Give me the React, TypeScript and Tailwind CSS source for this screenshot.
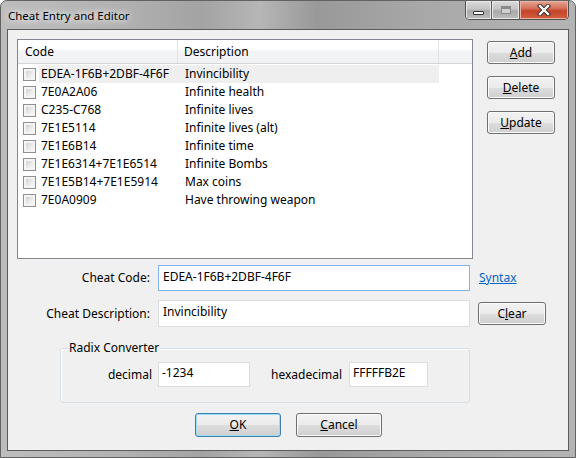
import React from "react";

const FONT = { fontFamily: '"Noto Sans", "Open Sans", Arial, sans-serif' };

function WinButton({
  children,
  className = "",
  isDefault = false,
}: {
  children: React.ReactNode;
  className?: string;
  isDefault?: boolean;
}) {
  return (
    <div
      className={
        "flex items-center justify-center rounded-[3px] border text-[12px] text-black " +
        (isDefault
          ? "border-[#3c7fb1] shadow-[inset_0_0_0_1px_#9fdcf7] bg-[linear-gradient(to_bottom,#f2f2f2_0%,#ebebeb_50%,#dddddd_51%,#cfcfcf_100%)] "
          : "border-[#707070] shadow-[inset_0_0_0_1px_#fbfbfb] bg-[linear-gradient(to_bottom,#f2f2f2_0%,#ebebeb_50%,#dddddd_51%,#cfcfcf_100%)] ") +
        className
      }
    >
      {children}
    </div>
  );
}

function Check() {
  return (
    <span className="flex h-[13px] w-[13px] shrink-0 border border-[#8e8f8f] bg-[#f4f4f4] p-[2px]">
      <span className="block h-full w-full bg-[linear-gradient(135deg,#cfd1d4_0%,#e6e7e8_50%,#f7f7f7_100%)]" />
    </span>
  );
}

const rows = [
  ["EDEA-1F6B+2DBF-4F6F", "Invincibility"],
  ["7E0A2A06", "Infinite health"],
  ["C235-C768", "Infinite lives"],
  ["7E1E5114", "Infinite lives (alt)"],
  ["7E1E6B14", "Infinite time"],
  ["7E1E6314+7E1E6514", "Infinite Bombs"],
  ["7E1E5B14+7E1E5914", "Max coins"],
  ["7E0A0909", "Have throwing weapon"],
];

export default function App() {
  return (
    <div
      style={FONT}
      className="flex h-[458px] w-[576px] flex-col overflow-hidden rounded-t-[7px] border border-[#626262] bg-[linear-gradient(90deg,#bdbdbd_0%,#b2b2b2_20%,#a3a3a3_35%,#b6b6b6_45%,#999999_55%,#a9a9a9_75%,#b4b4b4_100%)] px-[6px] text-[12px] text-black"
    >
      {/* Title bar */}
      <div className="flex h-[28px] shrink-0 items-center justify-between">
        <div className="pl-[1px] pt-[2px] text-[11.5px] text-black [text-shadow:0_0_6px_#ffffff,0_0_10px_#ffffff]">
          Cheat Entry and Editor
        </div>
        <div className="flex h-[19px] self-start overflow-hidden rounded-b-[5px] border border-t-0 border-[#4f4f4f]">
          <div className="flex w-[26px] items-center justify-center border-r border-[#5d5d5d] bg-[linear-gradient(to_bottom,#dcdcdc_0%,#c4c4c4_45%,#a9a9a9_55%,#bdbdbd_100%)] shadow-[inset_0_0_0_1px_#e8e8e8]">
            <span className="mt-[5px] block h-[4px] w-[11px] rounded-[1px] border border-[#333] bg-white" />
          </div>
          <div className="flex w-[28px] items-center justify-center border-r border-[#5d5d5d] bg-[linear-gradient(to_bottom,#dcdcdc_0%,#c4c4c4_45%,#a9a9a9_55%,#bdbdbd_100%)] shadow-[inset_0_0_0_1px_#e8e8e8]">
            <span className="block h-[8px] w-[10px] border border-[#8a8a8a] shadow-[inset_0_2px_0_#8a8a8a] bg-[#d0d0d0]" />
          </div>
          <div className="flex w-[48px] items-center justify-center bg-[linear-gradient(to_bottom,#e3a593_0%,#d67159_40%,#c4442a_55%,#d2603f_100%)] shadow-[inset_0_0_0_1px_#e9b4a6]">
            <svg width="14" height="12" viewBox="0 0 14 12">
              <path
                d="M3 2 L11 10 M11 2 L3 10"
                stroke="#3a2a28"
                strokeWidth="4.4"
                strokeLinecap="square"
              />
              <path
                d="M3 2 L11 10 M11 2 L3 10"
                stroke="#ffffff"
                strokeWidth="2.4"
                strokeLinecap="square"
              />
            </svg>
          </div>
        </div>
      </div>

      {/* Client area */}
      <div className="mb-[6px] flex flex-1 flex-col border border-[#5c5c5c] bg-[#f0f0f0]">
        {/* list + buttons */}
        <div className="flex pl-[9px] pt-[9px]">
          <div className="flex h-[220px] w-[456px] flex-col border border-[#828790] bg-white">
            <div className="flex h-[24px] border-b border-[#d5d5d5] bg-[linear-gradient(to_bottom,#ffffff_0%,#ffffff_45%,#f3f4f6_46%,#f1f2f4_100%)]">
              <div className="flex w-[160px] items-center border-r border-[#e3e3e3] pl-[7px]">
                Code
              </div>
              <div className="flex w-[261px] items-center border-r border-[#e3e3e3] pl-[6px]">
                Description
              </div>
              <div className="flex-1" />
            </div>
            <div className="flex flex-col pt-[1px]">
              {rows.map(([code, desc], i) => (
                <div key={code} className="flex h-[18px] items-center">
                  <div className="flex w-[21px] shrink-0 justify-start pl-[5px]">
                    <Check />
                  </div>
                  <div
                    className={
                      "flex h-[18px] w-[400px] items-center " +
                      (i === 0 ? "bg-[#efefef]" : "")
                    }
                  >
                    <div className="w-[144px] pl-[2px]">{code}</div>
                    <div className="pl-[2px]">{desc}</div>
                  </div>
                </div>
              ))}
            </div>
          </div>
          <div className="ml-[14px] flex flex-col gap-[12px] pt-[2px]">
            <WinButton className="h-[23px] w-[68px]">
              <span>
                <u>A</u>dd
              </span>
            </WinButton>
            <WinButton className="h-[23px] w-[68px]">
              <span>
                <u>D</u>elete
              </span>
            </WinButton>
            <WinButton className="h-[23px] w-[68px]">
              <span>
                <u>U</u>pdate
              </span>
            </WinButton>
          </div>
        </div>

        {/* Cheat code */}
        <div className="mt-[6px] flex items-center">
          <div className="w-[142px] text-right">Cheat Code:</div>
          <div className="ml-[8px] h-[26px] w-[312px] border border-[#7eb4ea] bg-white px-[4px] pt-[3px] leading-[16px]">
            EDEA-1F6B+2DBF-4F6F
          </div>
          <div className="ml-[9px] text-[#0066cc] underline">Syntax</div>
        </div>

        {/* Description */}
        <div className="mt-[9px] flex items-center">
          <div className="w-[142px] text-right">Cheat Description:</div>
          <div className="ml-[8px] h-[27px] w-[312px] border border-[#dadde2] bg-white px-[4px] pt-[3px] leading-[16px]">
            Invincibility
          </div>
          <WinButton className="ml-[8px] h-[23px] w-[68px]">
            <span>
              C<u>l</u>ear
            </span>
          </WinButton>
        </div>

        {/* Radix converter */}
        <div className="relative ml-[52px] mt-[21px] flex h-[55px] w-[410px] rounded-[3px] border border-[#d5dfe5] shadow-[inset_1px_1px_0_#ffffff] pt-[13px]">
          <div className="absolute -top-[9px] left-[7px] bg-[#f0f0f0] px-[1px] leading-[16px]">
            Radix Converter
          </div>
          <div className="flex items-start">
            <div className="w-[91px] pt-[4px] text-right">decimal</div>
            <div className="ml-[6px] h-[25px] w-[92px] border border-[#dadde2] bg-white px-[3px] pt-[2px] leading-[16px]">
              -1234
            </div>
            <div className="ml-[21px] w-[66px] whitespace-nowrap pt-[4px]">hexadecimal</div>
            <div className="ml-[12px] h-[25px] w-[79px] border border-[#dadde2] bg-white px-[3px] pt-[2px] leading-[16px]">
              FFFFFB2E
            </div>
          </div>
        </div>

        {/* OK / Cancel */}
        <div className="ml-[187px] mt-[10px] flex gap-[15px]">
          <WinButton isDefault className="h-[24px] w-[86px]">
            <span>
              <u>O</u>K
            </span>
          </WinButton>
          <WinButton className="h-[24px] w-[86px]">
            <span>
              <u>C</u>ancel
            </span>
          </WinButton>
        </div>
      </div>
    </div>
  );
}
